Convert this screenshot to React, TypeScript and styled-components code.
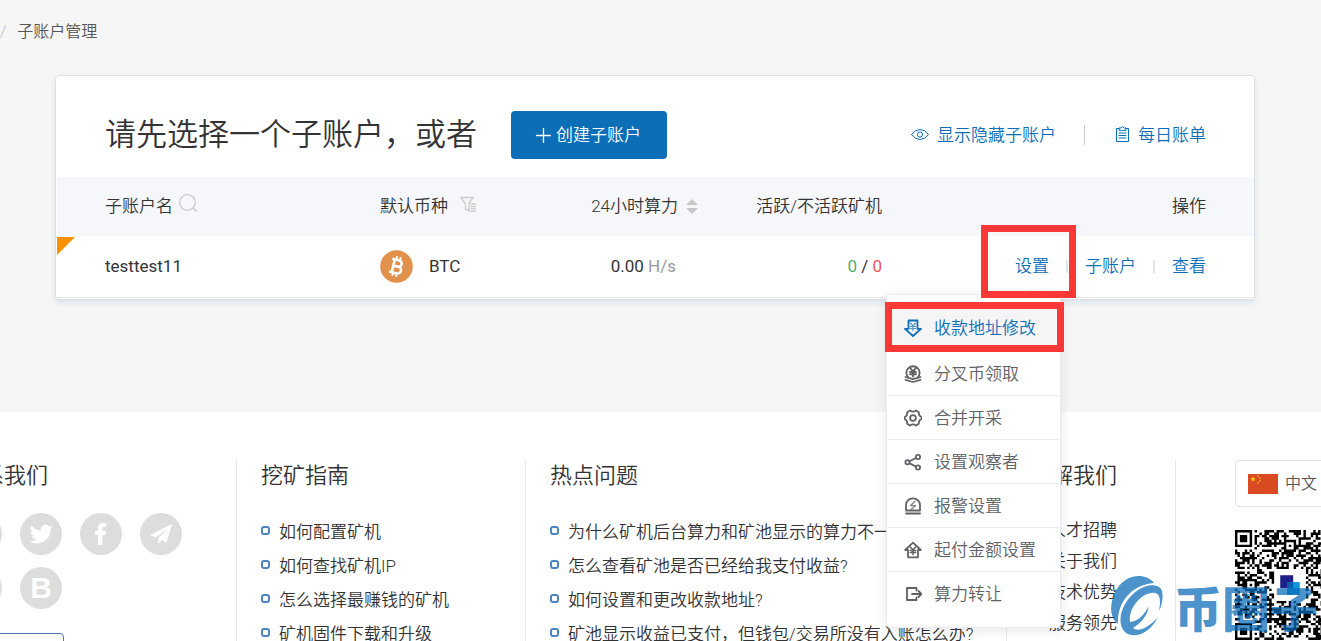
import React from 'react';
import styled, { createGlobalStyle, css } from 'styled-components';

const BLUE = '#0d6eb8';
const RED = '#fb3838';

const GlobalStyle = createGlobalStyle`
  *, *::before, *::after { box-sizing: border-box; }
  body {
    margin: 0;
    background: #f6f6f6;
    color: #333;
    font: 350 17px/24px Roboto, "Noto Sans CJK SC", sans-serif;
  }
  a { color: inherit; text-decoration: none; }
  ul { list-style: none; margin: 0; padding: 0; }
  button { font: inherit; cursor: pointer; }
`;

const Page = styled.div`
  position: relative;
  display: flex;
  flex-direction: column;
  height: 100vh;
  overflow: hidden;
`;

const Breadcrumb = styled.nav`
  display: flex;
  gap: 11px;
  padding: 20px 0 32px;
  font-size: 16px;
  line-height: 23px;
  color: #555;
`;

const Slash = styled.span`
  color: #bbb;
`;

const Card = styled.main`
  margin: 0 66px 0 55px;
  padding: 0 0 1px 1px;
  background: #fff;
  border: 1px solid #dde1e6;
  border-radius: 4px;
  box-shadow: 0 3px 6px rgba(13, 110, 184, 0.12);
`;

const CardHeader = styled.header`
  display: flex;
  align-items: center;
  padding: 35px 48px 18px;
`;

const Title = styled.h1`
  margin: 0 34px 0 0;
  font-size: 31px;
  line-height: 48px;
  font-weight: 350;
  white-space: nowrap;
`;

const CreateButton = styled.button`
  display: flex;
  align-items: center;
  gap: 5px;
  height: 48px;
  padding: 0 26px 0 25px;
  border: 0;
  border-radius: 4px;
  background: ${BLUE};
  color: #fff;
  white-space: nowrap;
`;

const HeaderActions = styled.div`
  display: flex;
  align-items: center;
  margin-left: auto;
  color: ${BLUE};
  white-space: nowrap;
`;

const ActionLink = styled.a`
  display: flex;
  align-items: center;
  gap: 8px;
`;

const HeaderRule = styled.span`
  width: 1px;
  height: 20px;
  margin: 0 30px 0 28px;
  background: #ccc;
`;

const AccountTable = styled.table`
  width: 100%;
  border-collapse: separate;
  border-spacing: 0;
  table-layout: fixed;
`;

const Col = styled.col<{ $w?: number }>`
  ${(p) => p.$w && css`width: ${p.$w}px;`}
`;

type CellProps = { $right?: boolean; $first?: boolean; $last?: boolean };

const cell = css<CellProps>`
  padding: 0;
  padding-left: ${(p) => (p.$first ? 48 : 0)}px;
  padding-right: ${(p) => (p.$last ? 48 : 0)}px;
  text-align: ${(p) => (p.$right ? 'right' : 'left')};
  white-space: nowrap;
`;

const Th = styled.th<CellProps>`
  ${cell}
  height: 59px;
  padding-bottom: 2px;
  background: #f5f7fb;
  font-weight: 350;
`;

const Td = styled.td<CellProps>`
  ${cell}
  position: relative;
  height: 62px;
  padding-bottom: 1px;
  border-bottom: 1px solid #e8e8e8;
`;

const Inline = styled.span<{ $gap: number }>`
  display: inline-flex;
  align-items: center;
  gap: ${(p) => p.$gap}px;
  vertical-align: middle;
`;

const Corner = styled.span`
  position: absolute;
  top: 1px;
  left: 0;
  border-top: 18px solid #f79100;
  border-right: 18px solid transparent;
`;

const Latin = styled.span`
  font-weight: 400;
`;

const Rate = styled.span`
  padding-right: 22px;
  font-weight: 400;
`;

const Unit = styled.span`
  color: #999;
`;

const Tint = styled.span<{ $color: string }>`
  color: ${(p) => p.$color};
`;

const RowActions = styled.div`
  display: flex;
  align-items: center;
  justify-content: flex-end;
  color: ${BLUE};
`;

const RowRule = styled.span`
  width: 2px;
  height: 13px;
  margin: 0 17px;
  background: #dfe5ec;
`;

const SettingsAnchor = styled.div`
  position: relative;
`;

const Menu = styled.ul`
  position: absolute;
  z-index: 2;
  top: 40px;
  right: -12px;
  width: 175px;
  && { padding: 11px 1px 12px; }
  background: #fff;
  border: 1px solid #e6ebf5;
  border-radius: 4px;
  box-shadow: 0 2px 12px rgba(0, 0, 0, 0.1);
  color: #606266;

  &::before {
    content: '';
    position: absolute;
    top: -4px;
    right: 25px;
    width: 7px;
    height: 7px;
    background: #fff;
    border: 1px solid #e6ebf5;
    border-width: 1px 0 0 1px;
    transform: rotate(45deg);
  }
`;

const MenuItem = styled.li<{ $active?: boolean }>`
  position: relative;
  & + & { border-top: 1px solid #ebebeb; }
  ${(p) => p.$active && css`
    z-index: 1;
    margin-bottom: 2px;
    background: #f5f5f5;
    color: ${BLUE};
  `}
`;

const MenuLink = styled.a`
  display: flex;
  align-items: center;
  gap: 12px;
  height: 43px;
  padding-left: 16px;
`;

const MarkSettings = styled.span`
  position: absolute;
  z-index: 3;
  inset: -29px -27px -20px -34px;
  border: 7px solid ${RED};
  pointer-events: none;
`;

const MarkItem = styled.span`
  position: absolute;
  inset: -4px -5px -3px -3px;
  border: 7px solid ${RED};
  pointer-events: none;
`;

const Footer = styled.footer`
  flex: 1 0 auto;
  display: grid;
  grid-template-columns: 277px 289px 1fr 169px 145px;
  margin: 112px 0 0 -40px;
  padding-top: 48px;
  background: #fff;
`;

const FooterCol = styled.section<{ $pad?: number; $right?: boolean }>`
  padding-left: ${(p) => p.$pad ?? 0}px;
  border-right: 1px solid #e8e8e8;
  white-space: nowrap;
  ${(p) => p.$right && css`padding-right: 58px; text-align: right;`}
`;

const FooterTitle = styled.h2`
  margin: 0 0 21px;
  font-size: 22px;
  line-height: 32px;
  font-weight: 350;
`;

const FooterList = styled.ul`
  && { padding-top: 2px; }
`;

const Question = styled.li`
  display: flex;
  align-items: center;
  gap: 9px;
  line-height: 34px;

  &::before {
    content: '';
    width: 9px;
    height: 9px;
    margin-bottom: 4px;
    border: 2px solid #4d84c4;
    border-radius: 3px;
  }
`;

const AboutItem = styled.li`
  line-height: 31px;
`;

const Socials = styled.div`
  display: grid;
  grid-template-columns: repeat(4, 42px);
  gap: 12px 18px;
`;

const SocialLink = styled.a`
  display: grid;
  place-items: center;
  height: 42px;
  border-radius: 50%;
  background: #ddd;
  color: #fff;
`;

const Bold = styled.span`
  font: 700 30px/42px "Liberation Sans", sans-serif;
`;

const OutlineButton = styled.button`
  width: 104px;
  height: 40px;
  margin-top: 24px;
  border: 1px solid #4679b0;
  border-radius: 4px;
  background: #fff;
`;

const LanguageCol = styled.section`
  padding-left: 59px;
`;

const Language = styled.button`
  display: flex;
  align-items: center;
  gap: 7px;
  width: 140px;
  height: 47px;
  margin-bottom: 23px;
  padding: 0 12px;
  border: 1px solid #e4e4e4;
  border-radius: 4px;
  background: #fff;
  color: #555;
  font-size: 16px;
`;

const Watermark = styled.div`
  position: absolute;
  z-index: 5;
  right: 3px;
  bottom: 4px;
  display: flex;
  align-items: center;
  gap: 10px;
  color: #0a6cb9;
  opacity: 0.73;
  font: 900 48px/62px "Noto Sans CJK SC", sans-serif;
  white-space: nowrap;
  pointer-events: none;
`;

const Svg = ({ w, h = w, sw = 1.5, children }: {
  w: number; h?: number; sw?: number; children: React.ReactNode;
}) => (
  <svg width={w} height={h} viewBox={`0 0 ${w} ${h}`} fill="none" stroke="currentColor"
    strokeWidth={sw} strokeLinejoin="round" strokeLinecap="round" aria-hidden="true">
    {children}
  </svg>
);

const Yen = ({ x, y, s = 1, w = 1.3 }: { x: number; y: number; s?: number; w?: number }) => (
  <path transform={`translate(${x} ${y}) scale(${s})`} strokeWidth={w}
    d="M-2.6-3.5 0-.6 2.6-3.5M0-.6V4M-2.7 0H2.7M-2.7 2H2.7" />
);

const menuItems = [
  { label: '收款地址修改', icon: <><path d="M4.500 1.500h9v8.300H17L9 17 1 9.800h3.500z" /><g opacity=".7"><Yen x={9} y={7.500} w={1.200} /></g></> },
  { label: '分叉币领取', icon: <><path d="M4.300 12.500a6.600 6.600 0 1 1 9.400 0" /><Yen x={9} y={7} s={1.1} w={1.700} /><path d="M1.500 12l7.500 2.200 7.500-2.200M1.500 14.800L9 17l7.500-2.200" /></> },
  { label: '合并开采', icon: <><path d="M6 1.500q3 2.200 6 0l2.800 1.700q-.2 3.700 2.700 4.800v2q-2.900 1.100-2.700 4.800L12 16.500q-3-2.200-6 0l-2.800-1.700Q3.400 11.100.8 10V8q2.600-1.100 2.400-4.800z" /><circle cx="9" cy="9" r="2.900" /></> },
  { label: '设置观察者', icon: <><circle cx="3.500" cy="9.300" r="2.100" /><circle cx="14" cy="4" r="2.100" /><circle cx="14" cy="14.500" r="2.100" /><path d="M5.500 8.300l6.500-3.300M5.500 10.300l6.500 3.300" /></> },
  { label: '报警设置', icon: <><path d="M2 13.500V8a7 6.700 0 0 1 14 0v5.500zM2 16.500h14" /><path d="M10.800 4.200L6.500 8.700h5L7.200 12.200" strokeWidth="1.300" opacity=".8" /></> },
  { label: '起付金额设置', icon: <><path d="M4 9H1.200L9 1.700 16.800 9H14v7.300H4z" /><Yen x={9} y={9.500} w={1.500} /></> },
  { label: '算力转让', icon: <><path d="M12.500 5.500V3H3v12h9.500v-2.500M8 9h9.500M14.500 6l3 3-3 3" /></> },
];

const guides = ['如何配置矿机', '如何查找矿机IP', '怎么选择最赚钱的矿机', '矿机固件下载和升级'];
const questions = [
  '为什么矿机后台算力和矿池显示的算力不一致?',
  '怎么查看矿池是否已经给我支付收益?',
  '如何设置和更改收款地址?',
  '矿池显示收益已支付，但钱包/交易所没有入账怎么办?',
];
const abouts = ['人才招聘', '关于我们', '技术优势', '服务领先'];

const QR_SIZE = 45;

function buildQr(): string {
  const square = (dx: number, dy: number, rings: number[]) =>
    rings.includes(Math.max(Math.abs(dx), Math.abs(dy)));
  let seed = 20190713;
  let d = '';
  for (let y = 0; y < QR_SIZE; y++) {
    for (let x = 0; x < QR_SIZE; x++) {
      seed = (seed * 1103515245 + 12345) % 2147483648;
      let on = (seed >> 12) % 100 < 51;
      [[3, 3], [41, 3], [3, 41]].forEach(([cx, cy]) => {
        const dx = x - cx;
        const dy = y - cy;
        if (Math.abs(dx) <= 4 && Math.abs(dy) <= 4) on = square(dx, dy, [0, 1, 3]);
      });
      [[22, 6], [6, 22], [38, 22], [22, 38], [38, 38]].forEach(([cx, cy]) => {
        const dx = x - cx;
        const dy = y - cy;
        if (Math.abs(dx) <= 2 && Math.abs(dy) <= 2) on = square(dx, dy, [0, 2]);
      });
      if (x >= 16 && x <= 28 && y >= 16 && y <= 28) on = false;
      if (on) d += `M${x} ${y}h1v1h-1z`;
    }
  }
  return d;
}

const qrPath = buildQr();

const QrCode = () => (
  <svg width="110" height="110" viewBox="0 0 45 45" role="img" aria-label="QR">
    <path d={qrPath} fill="#000" />
    <rect x="18.500" y="18.500" width="5.300" height="5.300" fill="#1d2088" />
    <rect x="21.300" y="21.300" width="5.200" height="5.200" fill="#1296db" />
    <rect x="21.300" y="21.300" width="2.500" height="2.500" fill="#0b5fae" />
  </svg>
);

const Flag = () => (
  <svg width="30" height="20" viewBox="0 0 30 20" aria-hidden="true">
    <rect width="30" height="20" fill="#d94a23" />
    <path fill="#ffd400" d="M5 2.200l.8 2h2.100L6.200 5.500l.7 2.100L5 6.300 3.100 7.600l.7-2.100L2.100 4.200h2.100z" />
    <g fill="#e8a21b">
      <circle cx="10" cy="2" r=".9" /><circle cx="12" cy="4" r=".9" />
      <circle cx="12" cy="7" r=".9" /><circle cx="10" cy="9" r=".9" />
    </g>
  </svg>
);

export default function App() {
  return (
    <Page>
      <GlobalStyle />
      <Breadcrumb>
        <Slash>/</Slash>
        <span>子账户管理</span>
      </Breadcrumb>

      <Card>
        <CardHeader>
          <Title>请先选择一个子账户，或者</Title>
          <CreateButton type="button">
            <Svg w={15} sw={1.3}><path d="M7.500.5v14M.5 7.500h14" /></Svg>
            创建子账户
          </CreateButton>
          <HeaderActions>
            <ActionLink href="#hidden">
              <Svg w={18} h={14} sw={1}>
                <path d="M.5 6.500Q4 1.500 9 1.500T17.500 6.500Q14 11.500 9 11.500T.5 6.500z" />
                <circle cx="9" cy="6.500" r="2.600" />
              </Svg>
              显示隐藏子账户
            </ActionLink>
            <HeaderRule />
            <ActionLink href="#bills">
              <Svg w={15} h={18} sw={1}>
                <path d="M4 2.500H1.500v13h12v-13H11M4 4V2h2q1.500-2.500 3 0h2v2zM4 7h7M4 9.500h7M4 12h7" />
              </Svg>
              每日账单
            </ActionLink>
          </HeaderActions>
        </CardHeader>

        <AccountTable>
          <colgroup>
            <Col $w={323} /><Col $w={160} /><Col $w={158} /><Col $w={184} /><Col />
          </colgroup>
          <thead>
            <tr>
              <Th $first>
                <Inline $gap={6}>
                  子账户名
                  <Tint $color="#ccc">
                    <Svg w={18} sw={1.3}><circle cx="8.500" cy="8.500" r="7.800" /><path d="M14 14l3.300 3" /></Svg>
                  </Tint>
                </Inline>
              </Th>
              <Th>
                <Inline $gap={12}>
                  默认币种
                  <Tint $color="#ccc">
                    <Svg w={16} sw={1.3}><path d="M5.500 13.500V8L.7 1.500h12.600L9 7v8.300L5.500 12.500M11 8h4.500M11 10.500h4.500M11 13h4.500M11 15.300h4.500" /></Svg>
                  </Tint>
                </Inline>
              </Th>
              <Th $right>
                <Inline $gap={8}>
                  24小时算力
                  <svg width="12" height="15" viewBox="0 0 12 15" fill="#c8c8c8" aria-hidden="true">
                    <path d="M0 6l6-6 6 6zM0 9h12l-6 6z" />
                  </svg>
                </Inline>
              </Th>
              <Th $right>活跃/不活跃矿机</Th>
              <Th $right $last>操作</Th>
            </tr>
          </thead>
          <tbody>
            <tr>
              <Td $first><Corner /><Latin>testtest11</Latin></Td>
              <Td>
                <Inline $gap={16}>
                  <svg width="33" height="33" viewBox="0 0 33 33" aria-hidden="true">
                    <circle cx="16.500" cy="16.500" r="16.300" fill="#e2914d" />
                    <g transform="rotate(14 16.500 16.500)" fill="none" stroke="#fff" strokeWidth="2.600">
                      <path d="M10.500 10h7.300a3.100 3.100 0 0 1 0 6.300H13M13 16.300h5.500a3.400 3.400 0 0 1 0 6.800h-8M13.200 10v13" />
                      <path d="M14.700 6.500V10M18.500 6.500V10M14.700 23v3.500M18.500 23v3.500" strokeWidth="2" />
                    </g>
                  </svg>
                  <Latin>BTC</Latin>
                </Inline>
              </Td>
              <Td $right><Rate>0.00 <Unit>H/s</Unit></Rate></Td>
              <Td $right>
                <Latin>
                  <Tint $color="#4caf6e">0</Tint> / <Tint $color="#f5535b">0</Tint>
                </Latin>
              </Td>
              <Td $right $last>
                <RowActions>
                  <SettingsAnchor>
                    <a href="#settings">设置</a>
                    <MarkSettings />
                    <Menu>
                      {menuItems.map((item, i) => (
                        <MenuItem key={item.label} $active={i === 0}>
                          <MenuLink href="#menu">
                            <Svg w={18} sw={1.8}>{item.icon}</Svg>
                            {item.label}
                          </MenuLink>
                          {i === 0 && <MarkItem />}
                        </MenuItem>
                      ))}
                    </Menu>
                  </SettingsAnchor>
                  <RowRule />
                  <a href="#sub">子账户</a>
                  <RowRule />
                  <a href="#view">查看</a>
                </RowActions>
              </Td>
            </tr>
          </tbody>
        </AccountTable>
      </Card>

      <Footer>
        <FooterCol>
          <FooterTitle>联系我们</FooterTitle>
          <Socials>
            <SocialLink href="#weibo" aria-label="Weibo" />
            <SocialLink href="#twitter" aria-label="Twitter">
              <svg width="24" height="24" viewBox="0 0 24 24" fill="currentColor">
                <path d="M23.600 4.900c-.8.400-1.700.6-2.700.8a4.700 4.700 0 0 0 2-2.600c-.9.500-1.900.9-3 1.100a4.700 4.700 0 0 0-8 4.300A13.300 13.300 0 0 1 2.200 3.600a4.700 4.700 0 0 0 1.500 6.300c-.8 0-1.500-.2-2.100-.6 0 2.300 1.500 4.200 3.700 4.700-.7.200-1.400.2-2.100.1a4.700 4.700 0 0 0 4.400 3.200A9.500 9.500 0 0 1 .7 19.300a13.400 13.400 0 0 0 20.600-12c.9-.7 1.700-1.500 2.300-2.400z" />
              </svg>
            </SocialLink>
            <SocialLink href="#facebook" aria-label="Facebook">
              <svg width="24" height="24" viewBox="0 0 24 24" fill="currentColor">
                <path d="M9 23V13H6V8.800h3V6c0-3.300 1.900-5 4.900-5l3.400.2v3.600h-2c-1.500 0-1.900.8-1.900 1.800v2.200h3.700l-.5 4.200h-3.200v10z" />
              </svg>
            </SocialLink>
            <SocialLink href="#telegram" aria-label="Telegram">
              <svg width="24" height="24" viewBox="0 0 24 24" fill="currentColor">
                <path d="M23 2L1 13l6 2.500L19 6 9 16.500V22l3.500-4 5 2.500z" />
              </svg>
            </SocialLink>
            <SocialLink href="#medium" aria-label="Medium" />
            <SocialLink href="#bihu" aria-label="Bihu"><Bold>B</Bold></SocialLink>
          </Socials>
          <OutlineButton type="button" aria-label="联系我们" />
        </FooterCol>

        <FooterCol $pad={24}>
          <FooterTitle>挖矿指南</FooterTitle>
          <FooterList>{guides.map((t) => <Question key={t}><a href="#guide">{t}</a></Question>)}</FooterList>
        </FooterCol>

        <FooterCol $pad={24}>
          <FooterTitle>热点问题</FooterTitle>
          <FooterList>{questions.map((t) => <Question key={t}><a href="#faq">{t}</a></Question>)}</FooterList>
        </FooterCol>

        <FooterCol $right>
          <FooterTitle>了解我们</FooterTitle>
          <FooterList>{abouts.map((t) => <AboutItem key={t}><a href="#about">{t}</a></AboutItem>)}</FooterList>
        </FooterCol>

        <LanguageCol>
          <Language type="button"><Flag />中文</Language>
          <QrCode />
        </LanguageCol>
      </Footer>

      <Watermark>
        <svg width="54" height="62" viewBox="0 0 54 62" fill="currentColor" aria-hidden="true">
          <path d="M44 8C36-2 17-2 7 14C-1 27-1 42 8 49C7 30 19 10 44 8z" />
          <path fillRule="evenodd" d="M52 16C50 9 38 8 28 15C12 26 6 46 14 56C22 65 39 60 48 42C38 54 27 57 23 53C40 42 38 31 39 31C33 42 27 46 20 47C18 34 32 16 45 18C50 19 51 25 49 36C53 28 53 21 52 16z" />
        </svg>
        币圈子
      </Watermark>
    </Page>
  );
}
